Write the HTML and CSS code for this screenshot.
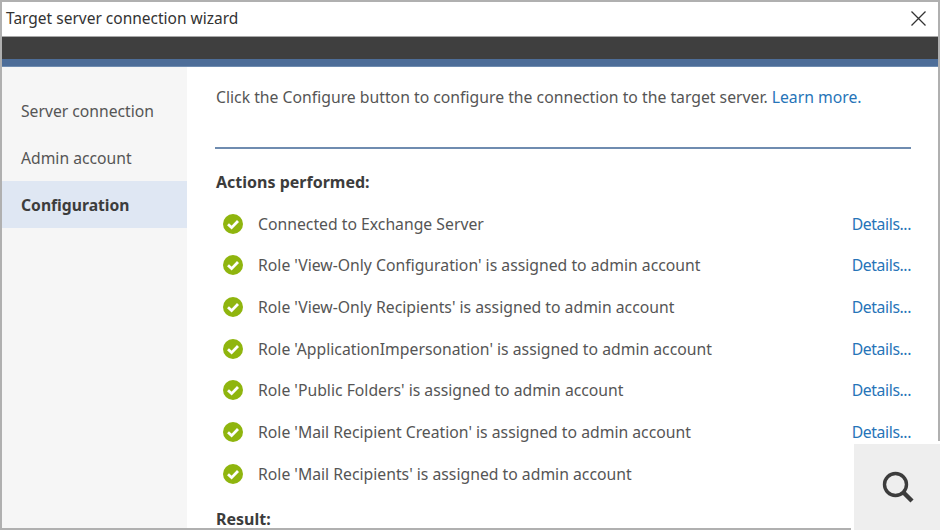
FILE: index.html
```html
<!DOCTYPE html>
<html lang="en">
<head>
<meta charset="utf-8">
<title>Target server connection wizard</title>
<link rel="stylesheet" href="styles.css">
</head>
<body>
<div class="window">
  <header class="titlebar">
    <span class="title">Target server connection wizard</span>
    <svg class="close" width="15" height="15" viewBox="0 0 15 15"><path d="M0.5 0.5L14.5 14.5M14.5 0.5L0.5 14.5" stroke="#333" stroke-width="1.3" fill="none"/></svg>
  </header>
  <div class="darkbar"></div>
  <div class="bluebar"></div>
  <div class="body">
    <nav class="side">
      <div class="nav-item">Server connection</div>
      <div class="nav-item">Admin account</div>
      <div class="nav-item active">Configuration</div>
    </nav>
    <main class="main">
      <p class="intro">Click the Configure button to configure the connection to the target server. <a class="link">Learn more.</a></p>
      <div class="rule"></div>
      <h2 class="heading">Actions performed:</h2>
      <ul class="list">
        <li class="row"><svg class="check" viewBox="0 0 20 20"><circle cx="10" cy="10" r="10" fill="#8fb50e"/><path d="M5 10.2L8.6 13.6L15 7" stroke="#fff" stroke-width="2.8" fill="none"/></svg><span class="row-text">Connected to Exchange Server</span><a class="link details">Details...</a></li>
        <li class="row"><svg class="check" viewBox="0 0 20 20"><circle cx="10" cy="10" r="10" fill="#8fb50e"/><path d="M5 10.2L8.6 13.6L15 7" stroke="#fff" stroke-width="2.8" fill="none"/></svg><span class="row-text">Role 'View-Only Configuration' is assigned to admin account</span><a class="link details">Details...</a></li>
        <li class="row"><svg class="check" viewBox="0 0 20 20"><circle cx="10" cy="10" r="10" fill="#8fb50e"/><path d="M5 10.2L8.6 13.6L15 7" stroke="#fff" stroke-width="2.8" fill="none"/></svg><span class="row-text">Role 'View-Only Recipients' is assigned to admin account</span><a class="link details">Details...</a></li>
        <li class="row"><svg class="check" viewBox="0 0 20 20"><circle cx="10" cy="10" r="10" fill="#8fb50e"/><path d="M5 10.2L8.6 13.6L15 7" stroke="#fff" stroke-width="2.8" fill="none"/></svg><span class="row-text">Role 'ApplicationImpersonation' is assigned to admin account</span><a class="link details">Details...</a></li>
        <li class="row"><svg class="check" viewBox="0 0 20 20"><circle cx="10" cy="10" r="10" fill="#8fb50e"/><path d="M5 10.2L8.6 13.6L15 7" stroke="#fff" stroke-width="2.8" fill="none"/></svg><span class="row-text">Role 'Public Folders' is assigned to admin account</span><a class="link details">Details...</a></li>
        <li class="row"><svg class="check" viewBox="0 0 20 20"><circle cx="10" cy="10" r="10" fill="#8fb50e"/><path d="M5 10.2L8.6 13.6L15 7" stroke="#fff" stroke-width="2.8" fill="none"/></svg><span class="row-text">Role 'Mail Recipient Creation' is assigned to admin account</span><a class="link details">Details...</a></li>
        <li class="row"><svg class="check" viewBox="0 0 20 20"><circle cx="10" cy="10" r="10" fill="#8fb50e"/><path d="M5 10.2L8.6 13.6L15 7" stroke="#fff" stroke-width="2.8" fill="none"/></svg><span class="row-text">Role 'Mail Recipients' is assigned to admin account</span></li>
      </ul>
      <h2 class="heading result">Result:</h2>
    </main>
  </div>
</div>
<div class="zoom-badge">
  <svg class="zoom-icon" width="34" height="34" viewBox="0 0 34 34"><circle cx="14.5" cy="14.5" r="11" stroke="#3c3c3c" stroke-width="3.4" fill="none"/><path d="M22.5 22.5L31 31" stroke="#3c3c3c" stroke-width="4.4" fill="none"/></svg>
</div>
</body>
</html>
```
FILE: styles.css
```css
* { box-sizing: border-box; }
html, body { margin: 0; padding: 0; }
body {
  width: 940px;
  height: 530px;
  overflow: hidden;
  position: relative;
  background: #fff;
  font-family: "Noto Sans", sans-serif;
  font-size: 15.75px;
  color: #4a4a4a;
}
.window {
  width: 940px;
  height: 530px;
  border: 2px solid #b0b0b0;
  display: flex;
  flex-direction: column;
  overflow: hidden;
}
.titlebar {
  height: 35px;
  flex: none;
  display: flex;
  align-items: center;
  justify-content: space-between;
  padding: 0 5px 2px 4px;
  border-bottom: 1px solid #a8a8a8;
  background: #fff;
}
.title { font-size: 15.5px; color: #333; }
.close { margin-right: 7px; }
.darkbar { height: 22px; flex: none; background: #3f3f3f; }
.bluebar { height: 8px; flex: none; background: #4d6d98; border-bottom: 1px solid #6f8cb0; }
.body { flex: 1; display: flex; min-height: 0; }
.side {
  width: 185px;
  flex: none;
  background: #f6f6f6;
  padding-top: 20px;
}
.nav-item {
  height: 47px;
  padding-left: 19px;
  line-height: 49px;
  font-size: 15.7px;
  color: #555;
}
.active {
  background: #dfe7f3;
  font-weight: 700;
  color: #3c3c3c;
}
.main { flex: 1; padding: 0 27px 0 28px; min-width: 0; }
.intro { margin: 0; height: 80px; padding: 16px 0 0 1px; line-height: 28px; color: #555; }
.link { color: #2674b8; }
.details { letter-spacing: -0.4px; }
.rule { height: 2px; background: #6f8cb0; }
.heading { margin: 0; padding-left: 1px; font-size: 16px; font-weight: 700; color: #3c3c3c; line-height: 22px; }
.list + .result { margin-top: 13px; }
.rule + .heading { margin-top: 22px; }
.list { list-style: none; margin: 10px 0 0; padding: 0; }
.row { height: 41.67px; display: flex; align-items: center; color: #555; }
.check { width: 20px; height: 20px; flex: none; margin: 0 15px 0 8px; }
.row-text { flex: 1; }
.zoom-badge {
  position: absolute;
  right: 0;
  bottom: 0;
  width: 89px;
  height: 89px;
  padding-left: 2px;
  background: #eee;
  border: solid #fff;
  border-width: 3px 0 0 3px;
  display: flex;
  align-items: center;
  justify-content: center;
}
```
